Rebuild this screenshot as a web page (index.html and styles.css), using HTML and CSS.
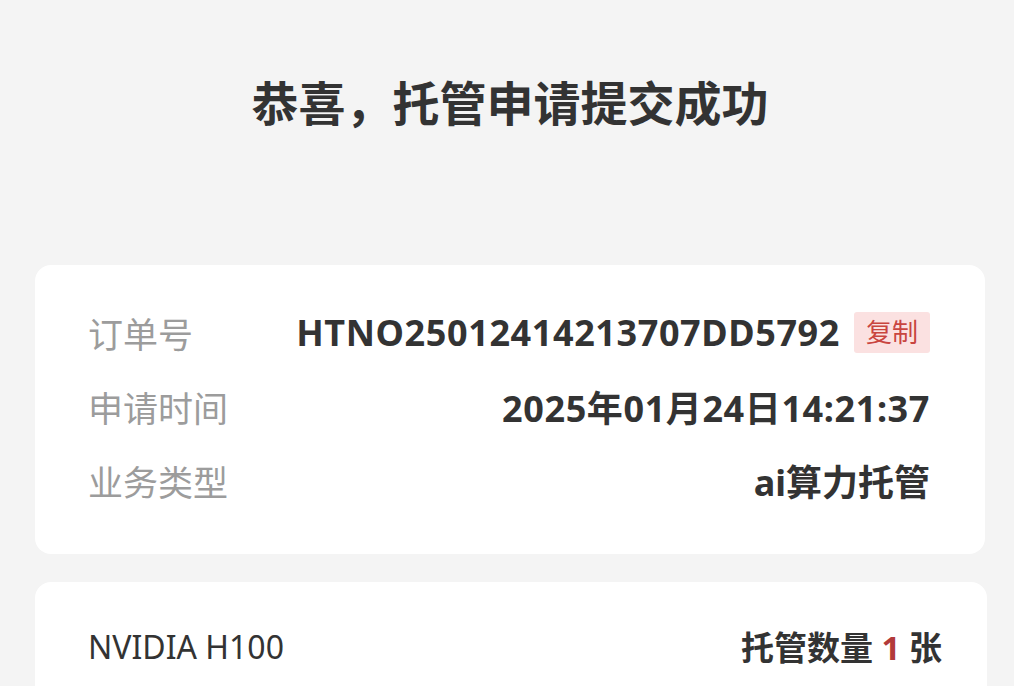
FILE: index.html
```html
<!DOCTYPE html>
<html lang="zh-CN">
<head>
    <meta charset="UTF-8">
    <title>托管申请提交成功</title>
    <link rel="stylesheet" href="styles.css">
</head>
<body>
    <div class="page">
        <h1 class="title">恭喜，托管申请提交成功</h1>

        <div class="card order-card">
            <div class="row">
                <span class="label">订单号</span>
                <span class="value">
                    <span class="num">HTNO25012414213707DD5792</span>
                    <span class="copy-btn">复制</span>
                </span>
            </div>
            <div class="row">
                <span class="label">申请时间</span>
                <span class="value num">2025年01月24日14:21:37</span>
            </div>
            <div class="row">
                <span class="label">业务类型</span>
                <span class="value">ai算力托管</span>
            </div>
        </div>

        <div class="card device-card">
            <div class="row">
                <span class="device-name">NVIDIA H100</span>
                <span class="device-count">托管数量 <em>1</em> 张</span>
            </div>
        </div>
    </div>
</body>
</html>
```

FILE: styles.css
```css
* {
    margin: 0;
    padding: 0;
    box-sizing: border-box;
}

body {
    font-family: 'Noto Sans', 'Noto Sans CJK SC', sans-serif;
    background: #f4f4f4;
    color: #333;
    overflow: hidden;
}

.page {
    padding: 71px 29px 0 35px;
}

.title {
    text-align: center;
    font-size: 47px;
    line-height: 64px;
    font-weight: 700;
    color: #333;
    margin-bottom: 130px;
}

.card {
    background: #fff;
    border-radius: 16px;
}

.order-card {
    padding: 30px 55px 37px 53px;
}

.order-card .row {
    display: flex;
    justify-content: space-between;
    align-items: center;
    height: 74px;
}

.label {
    font-size: 35px;
    color: #9c9c9c;
}

.value {
    display: flex;
    align-items: center;
    gap: 14px;
    font-size: 36px;
    font-weight: 700;
    color: #333;
}

.num {
    letter-spacing: 0.6px;
}

.copy-btn {
    background: #fbe1e1;
    color: #c9453f;
    font-size: 26px;
    font-weight: 400;
    letter-spacing: 0;
    padding: 3px 12px;
    border-radius: 3px;
    line-height: 35px;
}

.device-card {
    margin-top: 28px;
    margin-right: -2px;
    padding: 36px 45px 40px 53px;
}

.device-card .row {
    display: flex;
    justify-content: space-between;
    align-items: center;
    height: 56px;
}

.device-name {
    font-size: 32px;
    color: #333;
}

.device-count {
    font-size: 33px;
    font-weight: 700;
    color: #333;
}

.device-count em {
    font-style: normal;
    color: #b23a3a;
}
```
